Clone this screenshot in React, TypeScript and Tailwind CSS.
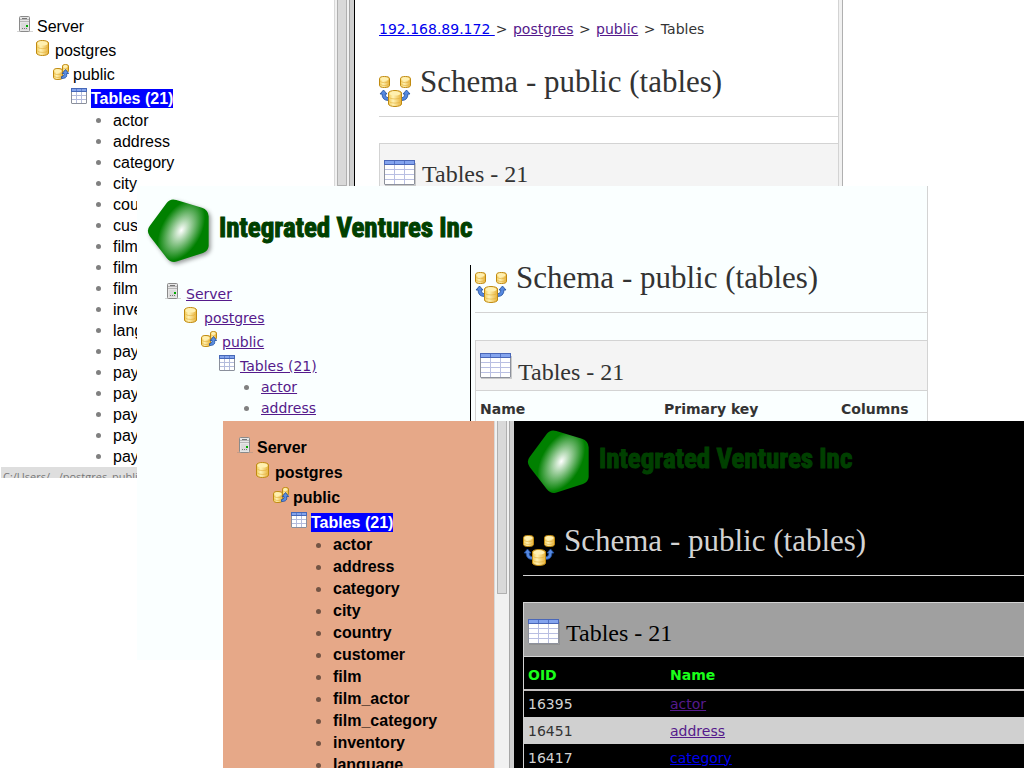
import { useId } from "react";
import type { ReactNode } from "react";

const TABLES = [
  "actor",
  "address",
  "category",
  "city",
  "country",
  "customer",
  "film",
  "film_actor",
  "film_category",
  "inventory",
  "language",
  "payment",
  "payment_p2007_01",
  "payment_p2007_02",
  "payment_p2007_03",
  "payment_p2007_04",
  "payment_p2007_05",
];

function ServerIcon() {
  return (
    <svg viewBox="0 0 16 16" className="size-4" aria-hidden="true">
      <path d="M0 15.5h16" stroke="#888" strokeOpacity=".35" />
      <rect x="2.5" y=".5" width="10" height="15" rx="1" fill="#e6e6e6" stroke="#8a8a8a" />
      <path d="M3 3.5h9M3 5.5h9" stroke="#b5b5b5" />
      <path d="M5 2.5h5" stroke="#777" />
      <path d="M4 7h7v7H4z" fill="#dadada" />
      <rect x="9" y="9" width="2" height="2" fill="#0a0" />
      <path d="M5 12.5h1M7 12.5h1M9 12.5h1" stroke="#777" />
    </svg>
  );
}

function Cylinder({ x, y, w, h, fill }: { x: number; y: number; w: number; h: number; fill: string }) {
  const r = w / 2;
  const c = Math.min(2.5, h / 5);
  return (
    <g>
      <path
        d={`M${x} ${y + c}a${r} ${c} 0 0 1 ${w} 0v${h - 2 * c}a${r} ${c} 0 0 1 ${-w} 0z`}
        fill={fill}
        stroke="#c08a10"
      />
      <ellipse cx={x + r} cy={y + c + 0.4} rx={r - 0.9} ry={c - 0.4} fill="#fff0b0" />
      <path
        d={`M${x + 1} ${y + h * 0.42}a${r - 1} ${c * 0.7} 0 0 0 ${w - 2} 0M${x + 1} ${y + h * 0.68}a${r - 1} ${c * 0.7} 0 0 0 ${w - 2} 0`}
        fill="none"
        stroke="#e0ac38"
        strokeOpacity=".75"
        strokeWidth=".8"
      />
    </g>
  );
}

function Gold({ id }: { id: string }) {
  return (
    <defs>
      <linearGradient id={id}>
        <stop offset="0" stopColor="#f3cb58" />
        <stop offset=".35" stopColor="#fff2b4" />
        <stop offset="1" stopColor="#e8b23a" />
      </linearGradient>
    </defs>
  );
}

function DatabaseIcon() {
  const id = useId();
  return (
    <svg viewBox="0 0 16 16" className="size-4" aria-hidden="true">
      <Gold id={id} />
      <Cylinder x={1.5} y={0.5} w={12} h={15} fill={`url(#${id})`} />
    </svg>
  );
}

function SchemaSmallIcon() {
  const id = useId();
  return (
    <svg viewBox="0 0 16 16" className="size-4" aria-hidden="true">
      <Gold id={id} />
      <Cylinder x={9.5} y={0.5} w={6} h={8} fill={`url(#${id})`} />
      <Cylinder x={0.5} y={4.5} w={9} h={11} fill={`url(#${id})`} />
      <path d="M12.500 5.500 15.700 9.500h-2v2q0 3-5.200 3v-2q2.500 0 2.500-2v-1H9.300z" fill="#5b8ee0" stroke="#1c4da0" strokeWidth=".8" />
    </svg>
  );
}

function TableSmallIcon() {
  return (
    <svg viewBox="0 0 16 16" className="size-4" aria-hidden="true">
      <rect x=".5" y=".5" width="15" height="15" rx=".5" fill="#fff" stroke="#8b909c" />
      <path d="M0 0h16v4H0z" fill="#4668b8" />
      <path d="M1 1h14v2H1z" fill="#84a4ec" />
      <path d="M1 7.500h14M1 11.500h14M5.500 4v11M10.500 4v11" stroke="#b4bcdc" />
      <path d="M5.500 1v2M10.500 1v2" stroke="#5f7fcc" />
    </svg>
  );
}

function SchemaIcon() {
  const id = useId();
  return (
    <svg viewBox="0 0 32 32" className="size-8 shrink-0" aria-hidden="true">
      <Gold id={id} />
      <Cylinder x={0.5} y={1.5} w={10} h={11} fill={`url(#${id})`} />
      <Cylinder x={21.500} y={1.5} w={10} h={11} fill={`url(#${id})`} />
      <g fill="#5588e0" stroke="#1d4c9c" strokeWidth=".8">
        <path d="M4.500 15 8 19H6.200q-.2 3.500 3.300 4v2.500Q3.200 25.500 3 19H1z" />
        <path d="M27.500 15 24 19h1.800q.2 3.500-3.300 4v2.500q6.300 0 6.500-6.500h2z" />
      </g>
      <Cylinder x={9.500} y={15.500} w={13} h={16} fill={`url(#${id})`} />
    </svg>
  );
}

function TableIcon() {
  return (
    <svg viewBox="0 0 32 27" className="h-[27px] w-8 shrink-0" aria-hidden="true">
      <path d="M1 25.500h30.500V3" fill="none" stroke="#777" strokeOpacity=".35" />
      <rect x=".5" y=".5" width="30" height="24" rx=".5" fill="#fff" stroke="#8d919c" />
      <path d="M0 0h31v5H0z" fill="#4a67b8" />
      <path d="M1 1h29v3H1z" fill="#84a4ee" />
      <path d="M1 9.500h29M1 14.500h29M1 19.500h29M10.500 5v19M20.500 5v19" stroke="#b9bfe2" />
      <path d="M10.500 1v3M20.500 1v3" stroke="#5273c8" />
    </svg>
  );
}

function Logo() {
  const id = useId();
  return (
    <div className="flex gap-[7px]">
      <svg viewBox="0 0 195 201" className="h-[67px] w-[65px] shrink-0 drop-shadow-[2px_2px_2px_rgba(0,0,0,0.4)]" aria-hidden="true">
        <defs>
          <radialGradient
            id={id}
            gradientUnits="userSpaceOnUse"
            cx="0"
            cy="0"
            r="1"
            gradientTransform="translate(103 100) rotate(-60) scale(100 59)"
          >
            <stop offset="0" stopColor="#fff" />
            <stop offset="1" stopColor="#008000" />
          </radialGradient>
        </defs>
        <path
          d="M59 18Q70 3 88 9L165 32Q184 38 185 58V147Q184 162 168 168L91 193Q72 199 59 183L8 117Q-3 101 8 87Z"
          fill={`url(#${id})`}
        />
      </svg>
      <span className="mt-[13px] whitespace-nowrap font-['Roboto_Condensed','Liberation_Sans',sans-serif] text-[27px] leading-9 font-bold text-[#004000] [-webkit-text-stroke:1px_#004000]">
        Integrated Ventures Inc
      </span>
    </div>
  );
}

type TreeLook = "plain" | "links" | "bold";

function Tree({ look, items }: { look: TreeLook; items: string[] }) {
  const nodes: [string, ReactNode, string][] = [
    ["Server", <ServerIcon />, "pl-0"],
    ["postgres", <DatabaseIcon />, "pl-[18px]"],
    ["public", <SchemaSmallIcon />, "pl-9"],
    ["Tables (21)", <TableSmallIcon />, "pl-[54px]"],
  ];
  const text = look === "links" ? "text-[#551a8b] underline" : "text-black";
  const lastNode = nodes.length - 1;
  return (
    <ul
      className={
        look === "links"
          ? "font-['DejaVu_Sans',sans-serif] text-sm"
          : look === "bold"
            ? "font-['Liberation_Sans',sans-serif] text-base font-bold"
            : "font-['Liberation_Sans',sans-serif] text-base"
      }
    >
      {nodes.map(([label, icon, indent], i) => (
        <li
          key={label}
          className={`flex ${indent} ${look === "links" ? "gap-[5px]" : "gap-1"} ${
            i === lastNode ? "h-[23px]" : look === "bold" ? "h-[25px]" : "h-6"
          }`}
        >
          <span className="pt-px">{icon}</span>
          <a
            href="#"
            className={`h-[19px] leading-[19px] whitespace-nowrap ${look === "links" ? "mt-[3px]" : "mt-[2px]"} ${
              i === lastNode && look !== "links" ? "bg-[#0000ff] font-bold text-white" : text
            }`}
          >
            {label}
          </a>
        </li>
      ))}
      {items.map((name) => (
        <li
          key={name}
          className={`flex items-center pl-[79px] ${
            look === "bold" ? "h-[22px] leading-[22px]" : "h-[21px] leading-[21px]"
          }`}
        >
          <span className={`mr-3 size-[5px] shrink-0 rounded-full ${look === "bold" ? "bg-[#735444]" : "bg-[#808080]"}`} />
          <a href="#" className={`whitespace-nowrap ${text}`}>
            {name}
          </a>
        </li>
      ))}
    </ul>
  );
}

function Splitter({ thumb }: { thumb: string }) {
  return (
    <div className="flex w-5 shrink-0" aria-hidden="true">
      <div className="flex-1 border-l border-[#d8d8d8] bg-[#f1f1f1] pl-[2px]">
        <div className={`w-[10px] rounded-b-[1px] border border-t-0 border-[#b0b0b0] bg-[#d9d9d9] ${thumb}`} />
      </div>
      <div className="w-[5px] border-l border-[#a6a6a6] bg-[#cfcfcf]" />
    </div>
  );
}

function PageTitle() {
  return (
    <div className="flex h-[46px] gap-[9px] border-b border-[#d3d3d3]">
      <div className="pt-1">
        <SchemaIcon />
      </div>
      <h1 className="whitespace-nowrap font-['Liberation_Serif',serif] text-[31px] leading-[22px]">
        Schema - public (tables)
      </h1>
    </div>
  );
}

function PlainWindow() {
  return (
    <section className="absolute top-0 left-0 flex h-[478px] w-[843px] overflow-hidden bg-white">
      <nav className="w-[334px] shrink-0 pt-[15px] pl-[17px]">
        <Tree look="plain" items={TABLES} />
      </nav>
      <Splitter thumb="h-[186px]" />
      <div className="flex-1 border-l border-black pt-[19px] pl-6 text-[#333]">
        <p className="font-['DejaVu_Sans',sans-serif] text-sm">
          <a href="#" className="text-[#0000ee] underline">{"192.168.89.172\u00a0"}</a>
          <span className="mx-px">{"> "}</span>
          <a href="#" className="text-[#551a8b] underline">postgres</a>
          <span className="mx-px">{" > "}</span>
          <a href="#" className="text-[#551a8b] underline">public</a>
          <span className="mx-px">{" > "}</span>
          Tables
        </p>
        <div className="pt-8">
          <PageTitle />
        </div>
        <div className="mt-[26px] flex h-[51px] gap-1 border border-r-0 border-[#d3d3d3] bg-[#f4f4f4] pt-4 pl-1">
          <TableIcon />
          <h2 className="pl-[2px] font-['Liberation_Serif',serif] text-2xl leading-7">Tables - 21</h2>
        </div>
      </div>
      <div className="w-[5px] border-r border-l border-r-[#b0b0b0] border-l-[#d3d3d3] bg-[#f1f1f1]" />
      <div className="absolute bottom-0 left-px h-[11px] w-60 overflow-hidden bg-[#dedede] pt-[2px] pl-[2px] font-['Open_Sans',sans-serif] text-[11px] leading-4 text-[#777]">
        C:/Users/.../postgres_public.html
      </div>
    </section>
  );
}

function MintWindow() {
  return (
    <section className="absolute top-[186px] left-[137px] flex h-[474px] w-[791px] flex-col overflow-hidden border-r border-[#d3d3d3] bg-[#faffff]">
      <header className="h-[79px] pt-[11px] pl-[10px]">
        <Logo />
      </header>
      <div className="flex flex-1">
        <nav className="w-[333px] shrink-0 pt-[17px] pl-7">
          <Tree look="links" items={TABLES.slice(0, 2)} />
        </nav>
        <div className="flex-1 border-l border-black pl-1 text-[#333]">
          <div className="pt-[2px]">
            <PageTitle />
          </div>
          <div className="mt-[27px] border border-r-0 border-[#d3d3d3]">
            <div className="flex h-[50px] gap-1 border-b border-[#d3d3d3] bg-[#f4f4f4] pt-3 pl-1">
              <TableIcon />
              <h2 className="pt-[5px] pl-[2px] font-['Liberation_Serif',serif] text-2xl leading-7">Tables - 21</h2>
            </div>
            <table className="w-full table-fixed text-left font-['DejaVu_Sans',sans-serif] text-sm">
              <thead>
                <tr className="h-[35px]">
                  <th className="w-[184px] pl-1">Name</th>
                  <th className="w-[177px] pl-1">Primary key</th>
                  <th className="pl-1">Columns</th>
                </tr>
              </thead>
            </table>
          </div>
        </div>
      </div>
    </section>
  );
}

function DarkWindow() {
  return (
    <section className="absolute top-[421px] right-0 bottom-0 left-[223px] flex overflow-hidden bg-black">
      <nav className="w-[271px] shrink-0 bg-[#e6a888] pt-[15px] pl-[14px]">
        <Tree look="bold" items={TABLES.slice(0, 11)} />
      </nav>
      <Splitter thumb="h-[173px]" />
      <div className="flex-1 pl-[9px] text-[#d3d3d3]">
        <header className="h-[109px] pt-[7px] pl-1">
          <Logo />
        </header>
        <PageTitle />
        <div className="mt-[26px] border border-r-0 border-[#d3d3d3]">
          <div className="flex h-[54px] gap-1 border-b border-[#d3d3d3] bg-[#a0a0a0] pt-4 pl-1 text-black">
            <TableIcon />
            <h2 className="pl-[2px] font-['Liberation_Serif',serif] text-2xl leading-7">Tables - 21</h2>
          </div>
          <table className="w-full table-fixed border-collapse text-left font-['DejaVu_Sans',sans-serif] text-sm">
            <thead>
              <tr className="h-[33px] border-b-2 border-[#c4c0c0] text-[#1aff1a]">
                <th className="w-[142px] pt-1 pl-1">OID</th>
                <th className="pt-1 pl-1">Name</th>
              </tr>
            </thead>
            <tbody>
              <tr className="h-[27px]">
                <td className="pl-1">16395</td>
                <td className="pl-1"><a href="#" className="text-[#551a8b] underline">actor</a></td>
              </tr>
              <tr className="h-[27px] bg-[#d0d0d0] text-[#333]">
                <td className="pl-1">16451</td>
                <td className="pl-1"><a href="#" className="text-[#551a8b] underline">address</a></td>
              </tr>
              <tr className="h-[27px]">
                <td className="pl-1">16417</td>
                <td className="pl-1"><a href="#" className="text-[#0000ee] underline">category</a></td>
              </tr>
            </tbody>
          </table>
        </div>
      </div>
    </section>
  );
}

export default function App() {
  return (
    <main className="relative h-screen overflow-hidden bg-white">
      <PlainWindow />
      <MintWindow />
      <DarkWindow />
    </main>
  );
}
